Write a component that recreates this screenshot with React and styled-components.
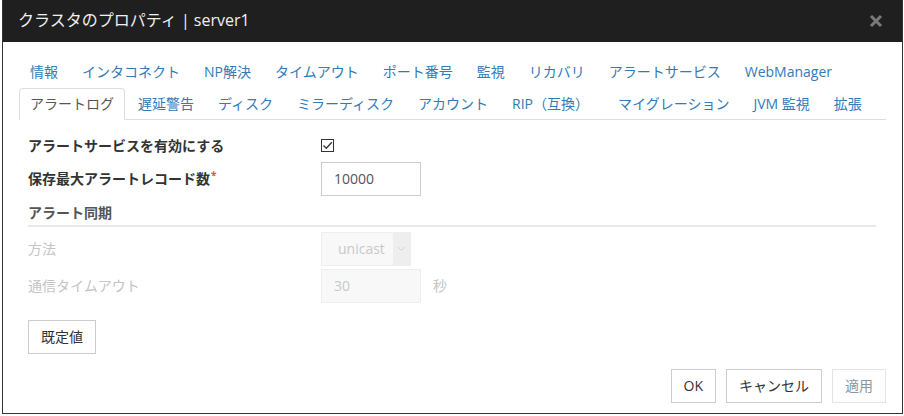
import React from 'react';
import styled, { createGlobalStyle } from 'styled-components';

const Global = createGlobalStyle`
  html, body { margin: 0; padding: 0; background: #fff; }
  body {
    font-family: "Open Sans", "Noto Sans CJK JP", sans-serif;
    font-size: 14px;
    color: #333;
  }
  * { box-sizing: border-box; }
`;

const Page = styled.div`
  padding: 0 1px 0 2px;
`;

const Dialog = styled.div`
  width: 901px;
  height: 414px;
  border: 1px solid #333;
  border-top: none;
  background: #fff;
  display: flex;
  flex-direction: column;
`;

const Header = styled.div`
  height: 42px;
  background: #1f1f1f;
  display: flex;
  align-items: center;
  justify-content: space-between;
  padding: 0 19px 0 15px;
`;

const Title = styled.div`
  color: #f0f0f0;
  font-size: 16px;
  line-height: 22px;
  margin-top: -2px;
`;

const Close = styled.button`
  border: none;
  background: transparent;
  padding: 0;
  width: 14px;
  height: 14px;
  display: flex;
  cursor: pointer;
`;

const Body = styled.div`
  flex: 1;
  display: flex;
  flex-direction: column;
  padding: 14px 16px 0 16px;
`;

const TabRow = styled.div`
  display: flex;
  align-items: flex-start;
  height: 32px;
  border-bottom: ${(p) => (p.$underline ? '1px solid #ddd' : 'none')};
`;

const Tab = styled.a`
  display: block;
  padding: 5px ${(p) => 10 + (p.$extra || 0)}px 5px 10px;
  line-height: 20px;
  height: 32px;
  margin-right: 2px;
  border: 1px solid ${(p) => (p.$active ? '#ddd' : 'transparent')};
  border-bottom-color: transparent;
  border-radius: 4px 4px 0 0;
  background: ${(p) => (p.$active ? '#fff' : 'transparent')};
  color: ${(p) => (p.$active ? '#555' : '#337ab7')};
  white-space: nowrap;
  cursor: pointer;
  position: relative;
`;

const Form = styled.div`
  display: flex;
  flex-direction: column;
  padding: 0 10px 0 9px;
`;

const Row = styled.div`
  display: flex;
  align-items: center;
  height: ${(p) => p.$h || 34}px;
  margin-top: ${(p) => p.$mt || 0}px;
`;

const Label = styled.div`
  width: 293px;
  line-height: 20px;
  font-weight: ${(p) => (p.$disabled ? 'normal' : 'bold')};
  color: ${(p) => (p.$disabled ? '#c4c4c4' : '#333')};
  white-space: nowrap;
`;

const Req = styled.sup`
  color: #d9534f;
  font-size: 10px;
  vertical-align: top;
  position: relative;
  top: -4px;
  margin-left: 1px;
`;

const Check = styled.span`
  width: 13px;
  height: 13px;
  border: 1px solid #333;
  display: flex;
  align-items: center;
  justify-content: center;
  background: #fff;
  margin-top: -2px;
`;

const TextInput = styled.div`
  width: 100px;
  height: 34px;
  border: 1px solid ${(p) => (p.$disabled ? '#eee' : '#ccc')};
  background: ${(p) => (p.$disabled ? '#f8f8f8' : '#fff')};
  color: ${(p) => (p.$disabled ? '#c8c8c8' : '#555')};
  padding: 6px 12px;
  line-height: 20px;
`;

const Select = styled.div`
  width: 90px;
  height: 34px;
  border: 1px solid #eee;
  background: #f8f8f8;
  display: flex;
  color: #c8c8c8;
`;

const SelectText = styled.div`
  flex: 1;
  padding: 6px 0 6px 16px;
  line-height: 20px;
`;

const SelectArrow = styled.div`
  width: 17px;
  background: #eee;
  display: flex;
  align-items: center;
  justify-content: center;
`;

const Unit = styled.span`
  margin-left: 12px;
  color: #c4c4c4;
  line-height: 20px;
`;

const Section = styled.div`
  margin-top: 4px;
  height: 27px;
  border-bottom: 2px solid #e8e8e8;
  font-weight: bold;
  color: #555;
  line-height: 20px;
  padding-top: 3px;
`;

const Button = styled.button`
  font-family: inherit;
  font-size: 14px;
  line-height: 20px;
  height: 34px;
  padding: 6px 12px;
  background: #fff;
  border: 1px solid ${(p) => (p.disabled ? '#e4e4e4' : '#ccc')};
  color: ${(p) => (p.disabled ? '#8b95a3' : '#333')};
  border-radius: 0;
  cursor: pointer;
`;

const DefaultRow = styled.div`
  display: flex;
  margin-top: 17px;
`;

const Footer = styled.div`
  display: flex;
  justify-content: flex-end;
  gap: 10px;
  margin-top: 15px;
`;

const tabs1 = ['情報', 'インタコネクト', 'NP解決', 'タイムアウト', 'ポート番号', '監視', 'リカバリ', 'アラートサービス', 'WebManager'];
const tabs2 = ['アラートログ', '遅延警告', 'ディスク', 'ミラーディスク', 'アカウント', 'RIP（互換）', 'マイグレーション', 'JVM 監視', '拡張'];

export default function App() {
  return (
    <Page>
      <Global />
      <Dialog>
        <Header>
          <Title>クラスタのプロパティ | server1</Title>
          <Close aria-label="close">
            <svg width="14" height="14" viewBox="0 0 14 14">
              <path d="M2 2 L12 12 M12 2 L2 12" stroke="#7a7a7a" strokeWidth="3" strokeLinecap="butt" />
            </svg>
          </Close>
        </Header>
        <Body>
          <TabRow>
            {tabs1.map((t) => (
              <Tab key={t}>{t}</Tab>
            ))}
          </TabRow>
          <TabRow $underline>
            {tabs2.map((t, i) => (
              <Tab key={t} $active={i === 0} $extra={t.startsWith('RIP') ? 5 : 0}>{t}</Tab>
            ))}
          </TabRow>
          <Form>
            <Row $h={26} $mt={13}>
              <Label>アラートサービスを有効にする</Label>
              <Check>
                <svg width="11" height="11" viewBox="0 0 11 11">
                  <path d="M1.5 5.5 L4.3 8.3 L9.8 2.2" fill="none" stroke="#333" strokeWidth="1.3" />
                </svg>
              </Check>
            </Row>
            <Row $mt={3}>
              <Label>
                保存最大アラートレコード数<Req>*</Req>
              </Label>
              <TextInput>10000</TextInput>
            </Row>
            <Section>アラート同期</Section>
            <Row $mt={5}>
              <Label $disabled>方法</Label>
              <Select>
                <SelectText>unicast</SelectText>
                <SelectArrow>
                  <svg width="9" height="6" viewBox="0 0 9 6">
                    <path d="M1 1 L4.5 4.5 L8 1" fill="none" stroke="#d4d4d4" strokeWidth="1" />
                  </svg>
                </SelectArrow>
              </Select>
            </Row>
            <Row $mt={3}>
              <Label $disabled>通信タイムアウト</Label>
              <TextInput $disabled>30</TextInput>
              <Unit>秒</Unit>
            </Row>
            <DefaultRow>
              <Button>既定値</Button>
            </DefaultRow>
          </Form>
          <Footer>
            <Button>OK</Button>
            <Button>キャンセル</Button>
            <Button disabled>適用</Button>
          </Footer>
        </Body>
      </Dialog>
    </Page>
  );
}
